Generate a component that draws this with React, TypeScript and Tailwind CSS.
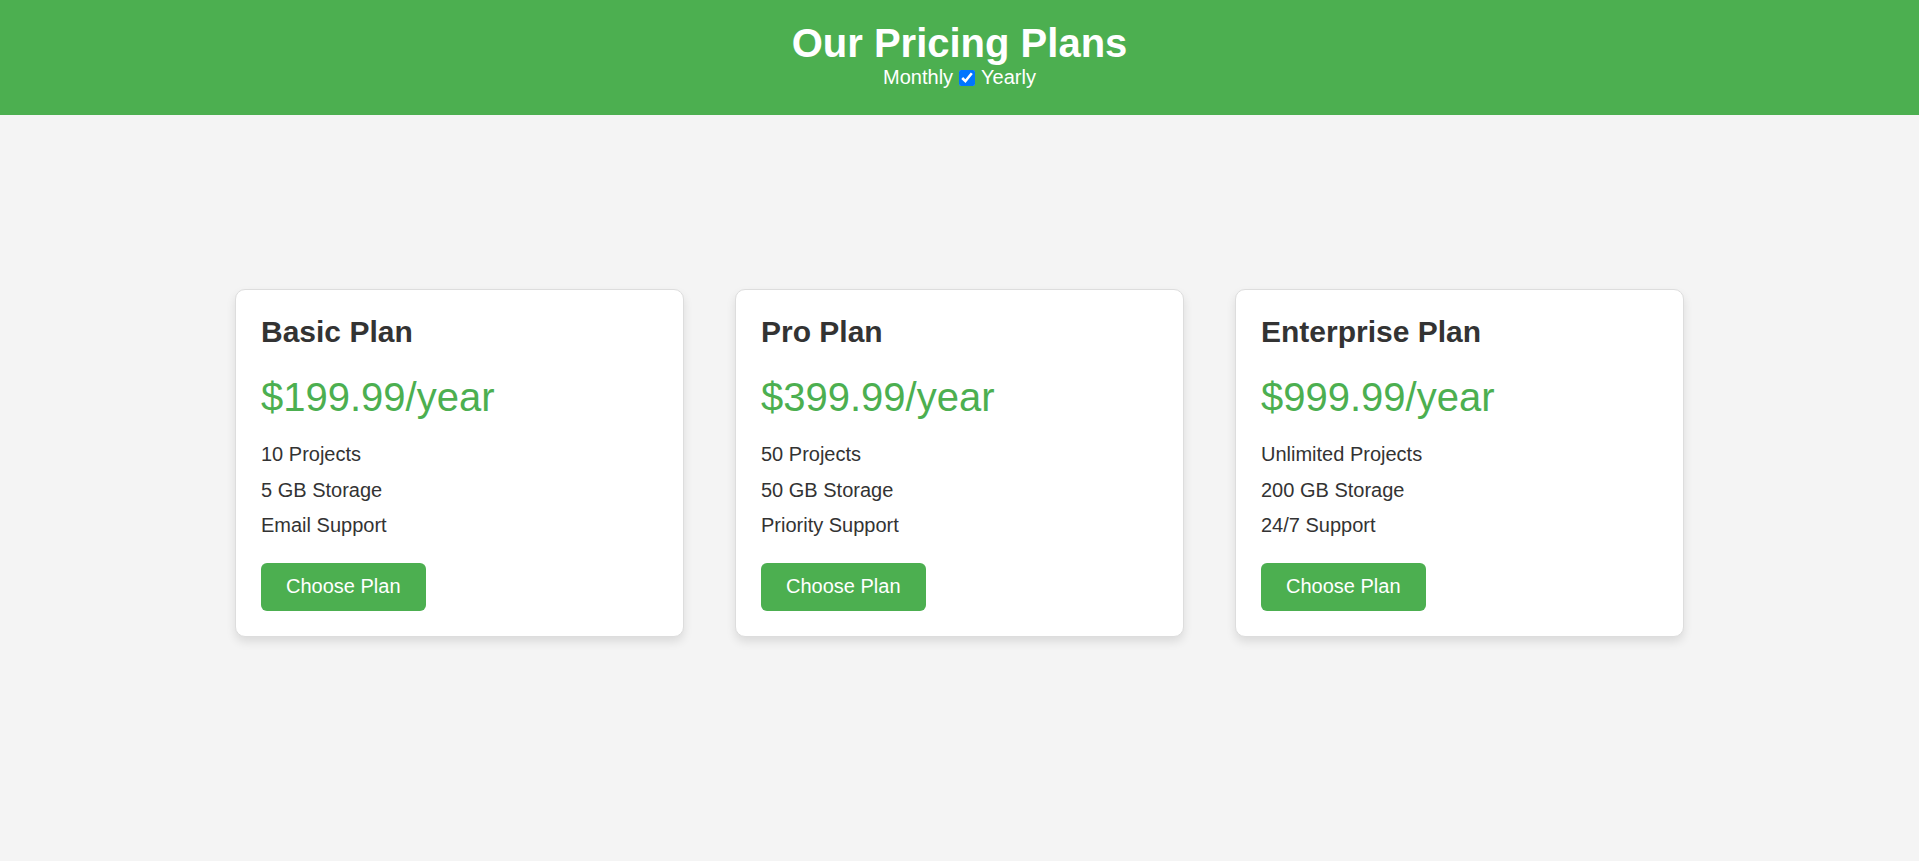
import { useState } from "react";

const plans = [
  {
    name: "Basic Plan",
    monthly: "$19.99/month",
    yearly: "$199.99/year",
    features: ["10 Projects", "5 GB Storage", "Email Support"],
  },
  {
    name: "Pro Plan",
    monthly: "$39.99/month",
    yearly: "$399.99/year",
    features: ["50 Projects", "50 GB Storage", "Priority Support"],
  },
  {
    name: "Enterprise Plan",
    monthly: "$99.99/month",
    yearly: "$999.99/year",
    features: ["Unlimited Projects", "200 GB Storage", "24/7 Support"],
  },
];

export default function App() {
  const [yearly, setYearly] = useState(true);

  return (
    <div className="min-h-screen bg-[#f4f4f4] font-['Liberation_Sans',Arial,sans-serif]">
      <header className="h-[115px] bg-[#4CAF50] pt-[20px] text-center text-white">
        <h1 className="text-[40px] font-bold leading-[46px]">
          Our Pricing Plans
        </h1>
        <div className="flex items-center justify-center text-[20px] leading-[23px]">
          <span>Monthly</span>
          <input
            type="checkbox"
            checked={yearly}
            onChange={(e) => setYearly(e.target.checked)}
            className="mx-[6px] h-[16px] w-[16px]"
          />
          <span>Yearly</span>
        </div>
      </header>

      <main className="flex justify-center gap-[51px] pt-[174px]">
        {plans.map((plan) => (
          <div
            key={plan.name}
            className="w-[449px] rounded-[10px] border border-[#ddd] bg-white p-[25px] shadow-[0_5px_10px_rgba(0,0,0,0.1)]"
          >
            <h2 className="mb-[25px] text-[30px] font-bold leading-[34px] text-[#333]">
              {plan.name}
            </h2>
            <div className="mb-[17px] text-[40px] leading-[46px] text-[#4CAF50]">
              {yearly ? plan.yearly : plan.monthly}
            </div>
            <ul className="mb-[19px]">
              {plan.features.map((f) => (
                <li
                  key={f}
                  className="py-[6.25px] text-[20px] leading-[23px] text-[#333]"
                >
                  {f}
                </li>
              ))}
            </ul>
            <button className="rounded-[6px] bg-[#4CAF50] px-[25px] py-[12.5px] text-[20px] leading-[23px] text-white">
              Choose Plan
            </button>
          </div>
        ))}
      </main>
    </div>
  );
}
